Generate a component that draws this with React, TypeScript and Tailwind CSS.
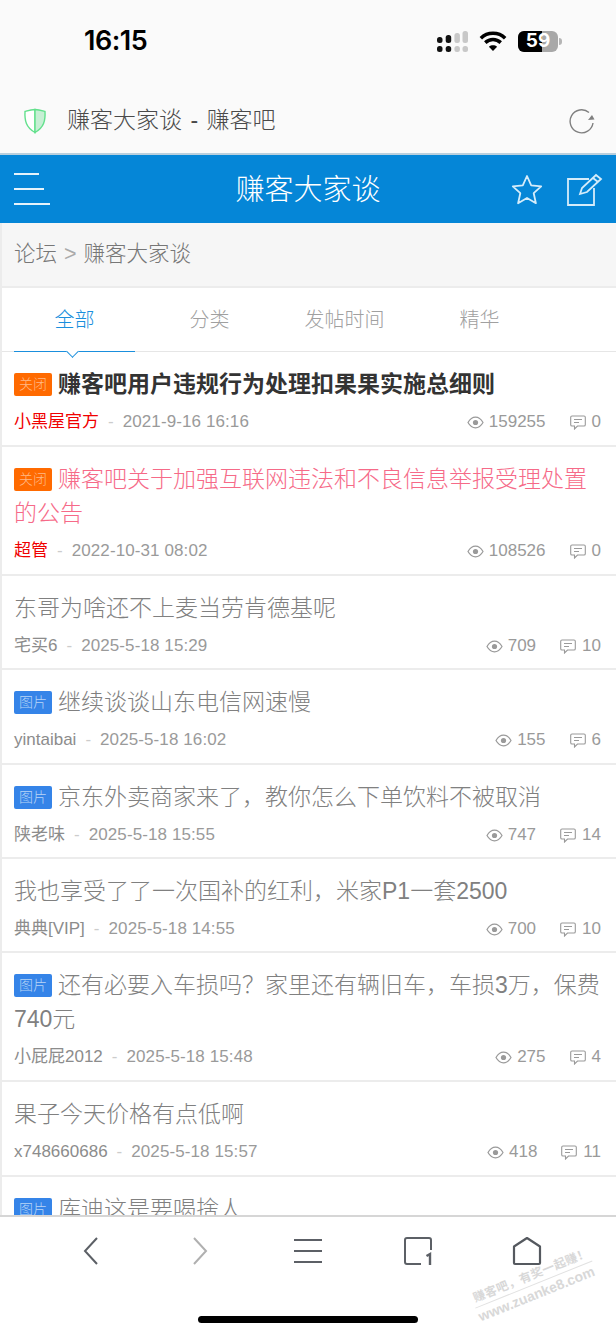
import React from "react";

type Post = {
  tag?: "关闭" | "图片";
  title: string;
  author: string;
  time: string;
  views: string;
  replies: string;
  kind?: "bold" | "pink";
  red?: boolean;
  twoLines?: boolean;
  rowClass: string;
};

const posts: Post[] = [
  { tag: "关闭", title: "赚客吧用户违规行为处理扣果果实施总细则", author: "小黑屋官方", time: "2021-9-16 16:16", views: "159255", replies: "0", kind: "bold", red: true, rowClass: "h-[95px]" },
  { tag: "关闭", title: "赚客吧关于加强互联网违法和不良信息举报受理处置的公告", author: "超管", time: "2022-10-31 08:02", views: "108526", replies: "0", kind: "pink", red: true, twoLines: true, rowClass: "h-[129px]" },
  { title: "东哥为啥还不上麦当劳肯德基呢", author: "宅买6", time: "2025-5-18 15:29", views: "709", replies: "10", rowClass: "h-[94px]" },
  { tag: "图片", title: "继续谈谈山东电信网速慢", author: "yintaibai", time: "2025-5-18 16:02", views: "155", replies: "6", rowClass: "h-[95px]" },
  { tag: "图片", title: "京东外卖商家来了，教你怎么下单饮料不被取消", author: "陕老味", time: "2025-5-18 15:55", views: "747", replies: "14", rowClass: "h-[94px]" },
  { title: "我也享受了了一次国补的红利，米家P1一套2500", author: "典典[VIP]", time: "2025-5-18 14:55", views: "700", replies: "10", rowClass: "h-[94px]" },
  { tag: "图片", title: "还有必要入车损吗？家里还有辆旧车，车损3万，保费740元", author: "小屁屁2012", time: "2025-5-18 15:48", views: "275", replies: "4", twoLines: true, rowClass: "h-[129px]" },
  { title: "果子今天价格有点低啊", author: "x748660686", time: "2025-5-18 15:57", views: "418", replies: "11", rowClass: "h-[95px]" },
  { tag: "图片", title: "库迪这是要喝捨人", author: "", time: "", views: "", replies: "", rowClass: "h-[95px]" },
];

const Eye = () => (
  <svg width="17" height="13" viewBox="0 0 17 13" fill="none" stroke="#9a9a9a" strokeWidth="1.2">
    <path d="M1 6.500C3 3 5.500 1.200 8.500 1.200S14 3 16 6.500C14 10 11.500 11.800 8.500 11.800S3 10 1 6.500Z" />
    <circle cx="8.500" cy="6.500" r="2.600" fill="#9a9a9a" stroke="none" />
  </svg>
);

const Bubble = () => (
  <svg width="16" height="15" viewBox="0 0 16 15" fill="none" stroke="#9a9a9a" strokeWidth="1.100">
    <path d="M2 1h12a1.300 1.300 0 0 1 1.300 1.300v7.400A1.300 1.300 0 0 1 14 11H7.500L4.500 14V11H2A1.300 1.300 0 0 1 .7 9.700V2.300A1.300 1.300 0 0 1 2 1Z" />
    <path d="M4 4.500h8M4 7.500h5" />
  </svg>
);

const Row = ({ post }: { post: Post }) => (
  <div className={`${post.rowClass} shrink-0 border-b-2 border-[#ececec] pl-[12px] pr-[15px] pt-[15px]`}>
    <div
      className={`${post.twoLines ? "h-[68px]" : "h-[34px]"} text-[23px] leading-[34px] ${
        post.kind === "bold"
          ? "font-bold text-[#333333]"
          : post.kind === "pink"
            ? "font-light text-[#f66a88]"
            : "font-light text-[#808080]"
      }`}
    >
      {post.tag && (
        <span
          className={`mr-[6px] inline-block h-[23px] w-[38px] rounded-[2px] text-center align-[3px] text-[14px] leading-[23px] font-light ${
            post.tag === "关闭" ? "bg-[#ff6a00] text-[#ffb987]" : "bg-[#3584e8] text-[#b9d5f7]"
          }`}
        >
          {post.tag}
        </span>
      )}
      {post.title}
    </div>
    {post.author && (
      <div className="mt-[11px] flex h-[20px] items-center text-[17px] leading-[20px] text-[#9a9a9a]">
        <span className={post.red ? "text-[#f00000]" : "text-[#8c8c8c]"}>{post.author}</span>
        <span className="mx-[9px] text-[#cccccc]">-</span>
        <span className="tracking-[0.1px]">{post.time}</span>
        <span className="ml-auto flex items-center gap-[5px]">
          <Eye />
          {post.views}
        </span>
        <span className="ml-[24px] flex items-center gap-[6px]">
          <Bubble />
          {post.replies}
        </span>
      </div>
    )}
  </div>
);

export default function App() {
  return (
    <div className="flex h-[1334px] w-[616px] flex-col overflow-hidden bg-white font-['Liberation_Sans','Noto_Sans_CJK_SC',sans-serif]">
      {/* status bar + browser title */}
      <div className="h-[155px] shrink-0 border-b-2 border-[#b9cfdd] bg-[#fafafa]">
        <div className="flex h-[84px] items-center">
          <span className="ml-[84px] -mt-[1px] text-[27px] font-semibold tracking-[-0.5px] text-black font-['Inter',sans-serif]">16:15</span>
          <div className="ml-auto mr-[54px] mt-[-1px] flex items-center">
            <svg width="31" height="21" viewBox="0 0 31 21">
              <rect x="0" y="6" width="5.500" height="6" rx="2.500" fill="#111" />
              <rect x="0" y="15" width="5.500" height="6" rx="2.500" fill="#111" />
              <rect x="8.700" y="4" width="5.500" height="8" rx="2.500" fill="#111" />
              <rect x="8.700" y="15" width="5.500" height="6" rx="2.500" fill="#111" />
              <rect x="17.400" y="2" width="5.500" height="10" rx="2.500" fill="#c8c8c8" />
              <rect x="17.400" y="15" width="5.500" height="6" rx="2.500" fill="#c8c8c8" />
              <rect x="25.500" y="0" width="5.500" height="12" rx="2.500" fill="#c8c8c8" />
              <rect x="25.500" y="15" width="5.500" height="6" rx="2.500" fill="#c8c8c8" />
            </svg>
            <svg className="ml-[11px]" width="28" height="21" viewBox="0 0 25 19" fill="none" stroke="#000" strokeWidth="3.200">
              <path d="M1.500 6.500C7.500 .6 17.500 .6 23.500 6.500" />
              <path d="M5.500 10.500C9.500 6.800 15.500 6.800 19.500 10.500" />
              <path d="M12.500 18l-3.700-3.800c2.200-1.700 5.200-1.700 7.400 0Z" fill="#000" stroke="none" />
            </svg>
            <div className="relative ml-[11px] flex h-[21px] w-[40px] items-center justify-center overflow-hidden rounded-[6px] bg-[#a8a8a8]">
              <div className="absolute inset-y-0 left-0 w-[60%] bg-black" />
              <span className="relative text-[19px] font-bold text-white font-['Inter',sans-serif]">59</span>
            </div>
            <div className="ml-[1px] h-[7px] w-[3px] rounded-r bg-[#b5b5b5]" />
          </div>
        </div>
        <div className="flex h-[69px] items-center pl-[23px] pr-[21px] pt-[4px]">
          <svg width="24" height="26" viewBox="0 0 24 26">
            <path d="M12 1.500C8 1.500 5 2.600 2 3.500c-.5 9 1 16 10 21z" fill="#ffffff" stroke="#62e08c" strokeWidth="1.400" />
            <path d="M12 1.500c4 0 7 1.100 10 2 .5 9-1 16-10 21z" fill="#c6efd4" stroke="#62e08c" strokeWidth="1.400" />
          </svg>
          <span className="ml-[20px] text-[23px] font-light text-[#4a4a4a]">
            赚客大家谈 <span className="px-[2px]">-</span> 赚客吧
          </span>
          <svg className="ml-auto" width="26" height="26" viewBox="0 0 26 26" fill="none" stroke="#808080" strokeWidth="1.400">
            <path d="M20 4.500A11.500 11.500 0 1 0 24 15" />
            <path d="M19 12l6.500-.5-2.500-4.500z" fill="#808080" stroke="none" />
          </svg>
        </div>
      </div>

      {/* blue header */}
      <div className="flex h-[68px] shrink-0 items-center bg-[#0586d7] pl-[14px] pr-[13px] text-white">
        <div className="flex w-[39px] flex-col gap-[13px]">
          <div className="h-[2px] w-[25px] bg-white/90" />
          <div className="h-[2px] w-[30px] bg-white/90" />
          <div className="h-[2px] w-[36px] bg-white/90" />
        </div>
        <div className="flex-1 pl-[52px] pt-[3px] text-center text-[29px] font-light">赚客大家谈</div>
        <svg width="32" height="31" viewBox="0 0 32 31" fill="none" stroke="#d5ecfa" strokeWidth="1.800" strokeLinejoin="round">
          <path d="M16 2l4.200 9.400 10 1-7.500 6.800 2.200 10L16 24l-8.900 5.200 2.200-10L1.800 12.400l10-1z" />
        </svg>
        <svg className="ml-[23px]" width="37" height="33" viewBox="0 0 37 33" fill="none" stroke="#d5ecfa" strokeWidth="1.800">
          <path d="M23 6H2v26h26V15" />
          <path d="M14 21l2-6L30 2l5 4-14 13z" />
          <path d="M27 5l5 4" />
        </svg>
      </div>

      {/* breadcrumb */}
      <div className="flex h-[65px] shrink-0 items-center border-b-2 border-l-2 border-[#ececec] bg-[#f6f6f6] pl-[12px] text-[21.5px] font-light text-[#777777]">
        论坛<span className="mx-[7px] text-[#aaaaaa]">&gt;</span>赚客大家谈
      </div>

      <div className="flex min-h-0 flex-1 flex-col border-l-2 border-[#ececec]">
        {/* tabs */}
        <div className="flex h-[64px] shrink-0 border-b border-[#e6e6e6] pl-[5px] text-[20px] font-light text-[#a0a0a0]">
          <div className="w-[135px] px-[7px] -mb-px">
            <div className="relative h-full border-b border-[#1a8fdd] pt-[1px] text-center leading-[62px] text-[#1a8fdd]">
              全部
              <div className="absolute -bottom-[5px] left-[54px] h-[9px] w-[9px] rotate-45 border-r border-b border-[#1a8fdd] bg-white" />
            </div>
          </div>
          <div className="w-[135px] pt-[1px] text-center leading-[62px]">分类</div>
          <div className="w-[135px] pt-[1px] text-center leading-[62px]">发帖时间</div>
          <div className="w-[135px] pt-[1px] text-center leading-[62px]">精华</div>
        </div>

        {/* post list */}
        <div className="min-h-0 flex-1 overflow-hidden">
          {posts.map((post) => (
            <Row key={post.title} post={post} />
          ))}
        </div>
      </div>

      {/* bottom browser bar */}
      <div className="relative h-[119px] shrink-0 overflow-hidden border-t-2 border-[#d6d6d6] bg-white">
        <div className="flex h-[60px] items-center pl-[83px] pt-[8px]">
          <svg width="16" height="30" viewBox="0 0 16 30" fill="none" stroke="#5c6066" strokeWidth="2">
            <path d="M14 2L2 15l12 13" />
          </svg>
          <svg className="ml-[93px]" width="16" height="30" viewBox="0 0 16 30" fill="none" stroke="#b0b0b0" strokeWidth="2">
            <path d="M2 2l12 13L2 28" />
          </svg>
          <div className="ml-[86px] flex w-[28px] flex-col gap-[9px]">
            <div className="h-[2px] bg-[#5c6066]" />
            <div className="h-[2px] bg-[#5c6066]" />
            <div className="h-[2px] bg-[#5c6066]" />
          </div>
          <svg className="ml-[81px]" width="30" height="30" viewBox="0 0 30 30" fill="none" stroke="#5c6066" strokeWidth="2">
            <path d="M18 28H4a2 2 0 0 1-2-2V4a2 2 0 0 1 2-2h22a2 2 0 0 1 2 2v10" />
            <path d="M23.500 20l3.500-2v11" strokeWidth="2.400" />
          </svg>
          <svg className="ml-[79px]" width="30" height="30" viewBox="0 0 30 30" fill="none" stroke="#55595f" strokeWidth="2.200" strokeLinejoin="round">
            <path d="M15 2L2 10.500V27a1 1 0 0 0 1 1h24a1 1 0 0 0 1-1V10.500z" />
          </svg>
        </div>
        {/* watermark */}
        <div className="absolute left-[471px] top-[50px] -rotate-[22deg] text-[#d8d8d8]">
          <div className="border-b border-[#e2e2e2] pl-[2px] text-[12px] leading-[17px] font-bold tracking-[0.4px] whitespace-nowrap">赚客吧，有奖一起赚！</div>
          <div className="text-[14px] leading-[18px] font-bold whitespace-nowrap">www.zuanke8.com</div>
        </div>
        <div className="absolute bottom-[11px] left-[198px] h-[7px] w-[220px] rounded-full bg-black" />
      </div>
    </div>
  );
}
